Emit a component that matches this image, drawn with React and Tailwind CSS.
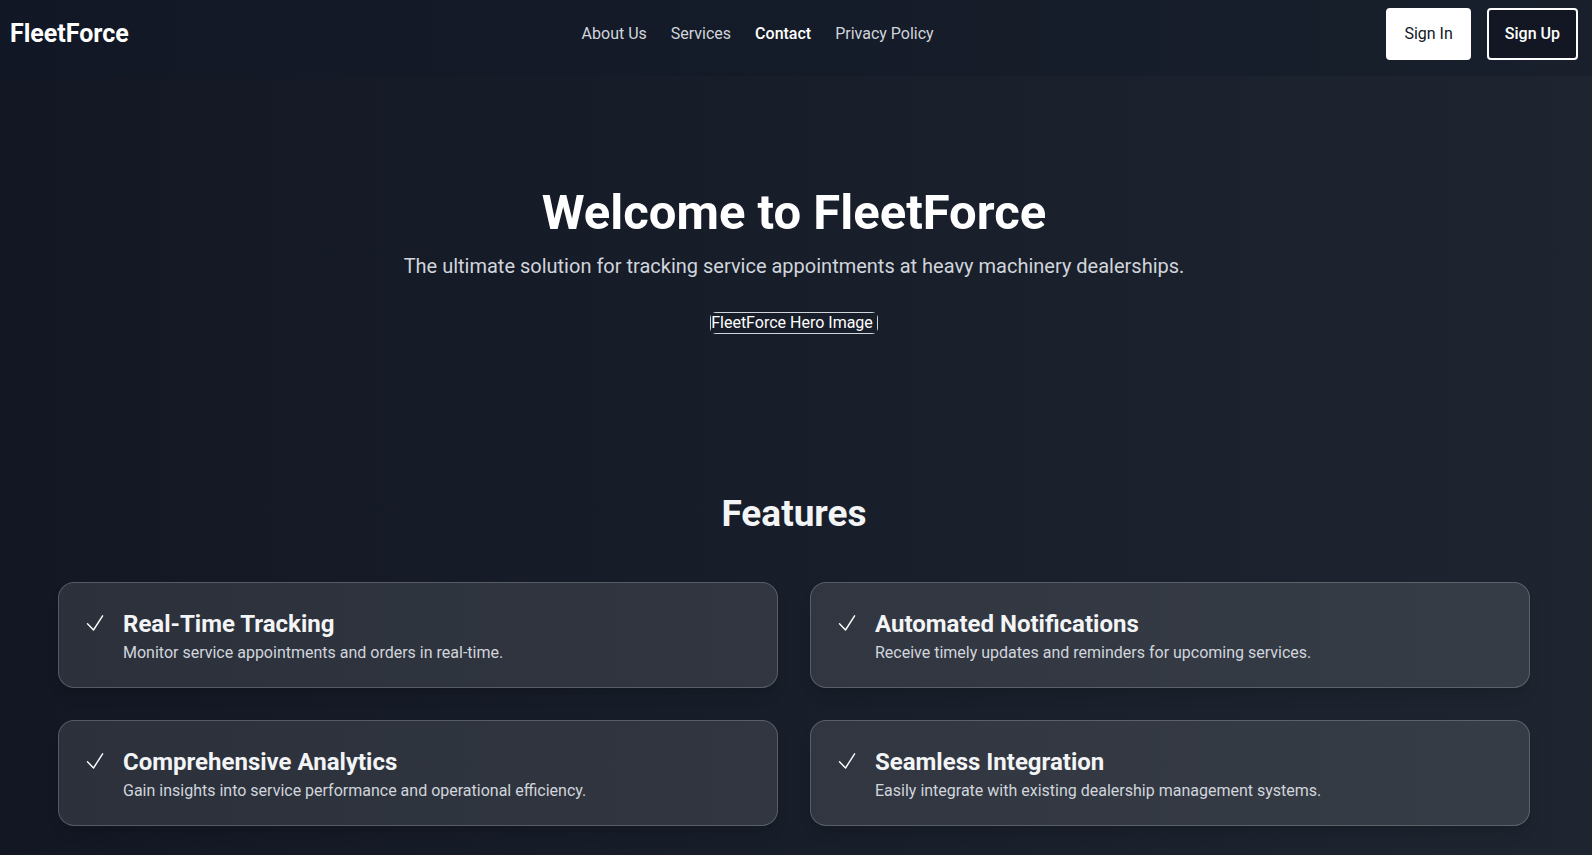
const navLinks = [
  { label: "About Us" },
  { label: "Services" },
  { label: "Contact", active: true },
  { label: "Privacy Policy" },
];

const features = [
  { title: "Real-Time Tracking", text: "Monitor service appointments and orders in real-time." },
  { title: "Automated Notifications", text: "Receive timely updates and reminders for upcoming services." },
  { title: "Comprehensive Analytics", text: "Gain insights into service performance and operational efficiency." },
  { title: "Seamless Integration", text: "Easily integrate with existing dealership management systems." },
];

function Check() {
  return (
    <svg className="size-6 shrink-0 text-white" viewBox="0 0 24 24" fill="none" stroke="currentColor" strokeWidth="1.4" strokeLinecap="round" strokeLinejoin="round" aria-hidden="true">
      <path d="M4.5 12.75 10.5 19 19.6 4.8" />
    </svg>
  );
}

export default function App() {
  return (
    <div className="min-h-screen bg-linear-to-r from-[#121723] to-[#1e2530] pr-1 font-['Roboto','Liberation_Sans',sans-serif] text-white">
      <header className="-mr-1 flex items-start justify-between bg-[#111827]/40 pt-2 pr-3.5 pb-4 pl-2.5">
        <div className="flex h-13 items-center text-[25px] font-bold">
          <a href="#home">FleetForce</a>
        </div>
        <nav className="flex h-13 items-center gap-6">
          {navLinks.map(({ label, active }) => (
            <a key={label} href="#nav" className={active ? "font-medium text-white" : "text-gray-300"}>
              {label}
            </a>
          ))}
        </nav>
        <div className="flex gap-4">
          <button type="button" className="h-13 rounded border-2 border-white bg-white px-4 text-[#111722]">Sign In</button>
          <button type="button" className="h-13 rounded border-2 border-white bg-[#121723] px-4 font-medium text-white">Sign Up</button>
        </div>
      </header>

      <main>
        <section className="flex flex-col items-center px-8 pt-28 pb-40 text-center">
          <h1 className="text-[49px] leading-[50px] font-bold">Welcome to FleetForce</h1>
          <p className="mt-3.5 text-xl text-gray-300">
            The ultimate solution for tracking service appointments at heavy machinery dealerships.
          </p>
          <div role="img" aria-label="FleetForce Hero Image" className="mt-8 overflow-hidden rounded-md">
            <div className="border border-gray-300 pr-1 leading-5">FleetForce Hero Image</div>
          </div>
        </section>

        <section className="mx-auto max-w-384 px-8">
          <h2 className="text-center text-[37px] leading-10 font-bold text-gray-100">Features</h2>
          <div className="mt-12 grid grid-cols-2 gap-8">
            {features.map(({ title, text }) => (
              <article key={title} className="flex min-h-[106px] items-start gap-4 rounded-2xl border border-white/20 bg-white/11 px-6 pt-6 shadow-lg">
                <div className="flex h-8 items-center">
                  <Check />
                </div>
                <div>
                  <h3 className="text-2xl leading-[34px] font-bold text-gray-100">{title}</h3>
                  <p className="text-gray-300">{text}</p>
                </div>
              </article>
            ))}
          </div>
        </section>
      </main>
    </div>
  );
}
